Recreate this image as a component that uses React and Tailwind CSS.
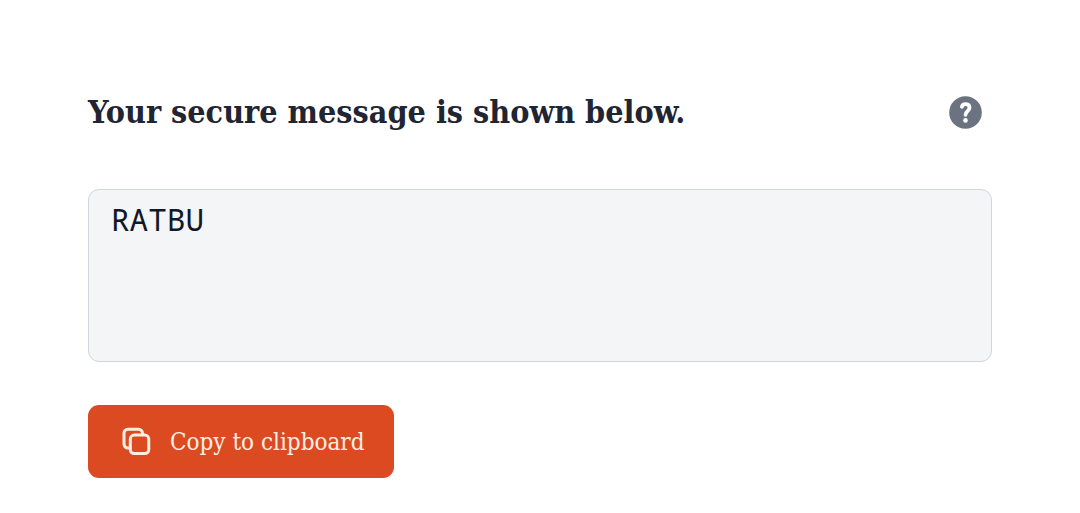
import React from 'react';

export default function App() {
  return (
    <main className="bg-white px-[88px] pt-[88px] pb-9">
      <div className="flex items-center justify-between pr-1">
        <h1 className="font-['DejaVu_Serif_Condensed','DejaVu_Serif',serif] text-[32px] leading-12 font-bold text-[#1f2533]">
          Your secure message is shown below.
        </h1>
        <button type="button" aria-label="Help" className="p-0.5">
          <svg viewBox="0 0 41 41" className="size-[41px]">
            <circle cx="20.5" cy="20.5" r="16.3" fill="#6b7280" />
            <path d="M16.9 14.8C17.8 11 24.5 11.2 24.5 15.8C24.5 19.2 20.5 19 20.5 22.8" fill="none" stroke="white" strokeWidth="3.8" strokeLinecap="round" strokeLinejoin="round" />
            <circle cx="20.5" cy="28.4" r="2.3" fill="white" />
          </svg>
        </button>
      </div>
      <textarea
        aria-label="Secure message"
        readOnly
        defaultValue="RATBU"
        className="mt-[53px] block h-[173px] w-full resize-none rounded-[11px] border border-[#d1d5db] bg-[#f3f5f7] px-[22px] py-[9px] font-['Noto_Sans_Mono','DejaVu_Sans_Mono',monospace] text-[31px] leading-10 text-[#111827]"
      />
      <button type="button" className="mt-[43px] flex h-[73px] items-center gap-4 rounded-[11px] bg-[#db4a20] px-[30px] font-['DejaVu_Serif_Condensed','DejaVu_Serif',serif] text-[24px] text-[#ffefe2]">
        <svg viewBox="0 0 24 24" className="size-9" fill="none" stroke="currentColor" strokeWidth="2" strokeLinejoin="round" strokeLinecap="round">
          <rect x="8.2" y="7.4" width="12.3" height="12.3" rx="2.6" />
          <path d="M16.3 7.2V6.1a2.6 2.6 0 00-2.6-2.6H6.6a2.6 2.6 0 00-2.6 2.6v7.3a2.6 2.6 0 002.6 2.6h1.3" />
        </svg>
        Copy to clipboard
      </button>
    </main>
  );
}
